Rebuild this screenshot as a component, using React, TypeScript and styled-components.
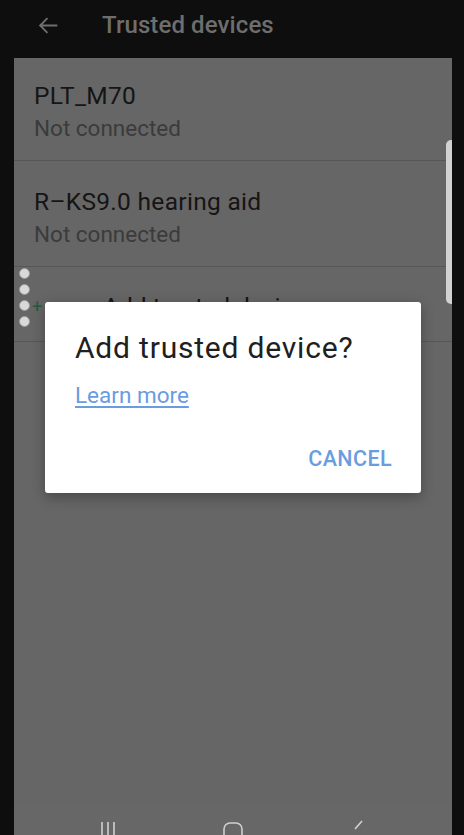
import React from "react";
import styled, { createGlobalStyle } from "styled-components";

const GlobalStyle = createGlobalStyle`
  html, body {
    margin: 0;
    padding: 0;
    background: #0e0e0e;
  }
  body {
    font-family: Roboto, "Noto Sans", sans-serif;
  }
`;

interface Device {
  name: string;
  status: string;
}

const devices: Device[] = [
  { name: "PLT_M70", status: "Not connected" },
  { name: "R\u2013KS9.0 hearing aid", status: "Not connected" },
];

const App = () => {
  return (
    <>
      <GlobalStyle />
      <Screen>
        <TopBar>
          <BackIcon viewBox="0 0 24 24">
            <path
              d="M20.5 12H4M11 5 4 12l7 7"
              fill="none"
              stroke="#6e6e6e"
              strokeWidth="1.8"
            />
          </BackIcon>
          <Title>Trusted devices</Title>
        </TopBar>
        <Content>
          <List>
            {devices.map((d) => (
              <DeviceRow key={d.name}>
                <DeviceName>{d.name}</DeviceName>
                <DeviceStatus>{d.status}</DeviceStatus>
              </DeviceRow>
            ))}
            <AddRow>
              <Plus>+</Plus>
              <AddLabel>Add trusted device</AddLabel>
            </AddRow>
          </List>
          <NavBar>
            <NavIcon viewBox="0 0 20 20">
              <path d="M3 5v14M9 5v14M15 5v14" stroke="#d0d0d0" strokeWidth="1.6" fill="none" />
            </NavIcon>
            <NavIcon viewBox="0 0 20 20">
              <rect x="1" y="6" width="18" height="18" rx="6" stroke="#d0d0d0" strokeWidth="1.6" fill="none" />
            </NavIcon>
            <NavIcon viewBox="0 0 20 20">
              <path d="M15 4 8 12" stroke="#d0d0d0" strokeWidth="1.6" fill="none" />
            </NavIcon>
          </NavBar>
          <ScrollHandle />
          <EdgeHandle>
            <Dot />
            <Dot />
            <Dot />
            <Dot />
          </EdgeHandle>
          <Dialog>
            <DialogTitle>Add trusted device?</DialogTitle>
            <LearnMore href="#">Learn more</LearnMore>
            <DialogActions>
              <CancelButton>CANCEL</CancelButton>
            </DialogActions>
          </Dialog>
        </Content>
      </Screen>
    </>
  );
};

export default App;

const Screen = styled.div`
  width: 464px;
  height: 835px;
  display: flex;
  flex-direction: column;
  background: #0e0e0e;
  overflow: hidden;
`;

const TopBar = styled.div`
  height: 58px;
  flex-shrink: 0;
  display: flex;
  align-items: center;
  padding-left: 36px;
  padding-bottom: 8px;
  box-sizing: border-box;
`;

const BackIcon = styled.svg`
  width: 25px;
  height: 25px;
`;

const Title = styled.div`
  margin-left: 41px;
  font-size: 24px;
  font-weight: 500;
  color: #6e6e6e;
  letter-spacing: 0.1px;
`;

const Content = styled.div`
  position: relative;
  flex: 1;
  margin: 0 12px 0 14px;
  background: #666666;
  display: flex;
  flex-direction: column;
`;

const List = styled.div`
  flex: 1;
  display: flex;
  flex-direction: column;
`;

const DeviceRow = styled.div`
  height: 103px;
  box-sizing: border-box;
  padding: 22px 20px 0 20px;
  border-bottom: 1px solid #575757;
  display: flex;
  flex-direction: column;
  gap: 2px;

  & + & {
    height: 106px;
    padding-top: 25px;
  }
`;

const DeviceName = styled.div`
  font-size: 24.5px;
  color: #151515;
  line-height: 32px;
  letter-spacing: 0.3px;
`;

const DeviceStatus = styled.div`
  font-size: 22.5px;
  color: #3b3b3b;
  line-height: 28px;
`;

const AddRow = styled.div`
  height: 75px;
  box-sizing: border-box;
  border-bottom: 1px solid #575757;
  display: flex;
  align-items: center;
  padding-left: 18px;
  padding-top: 4px;
`;

const Plus = styled.span`
  font-size: 18px;
  color: #1f5a44;
  width: 71px;
`;

const AddLabel = styled.span`
  font-size: 24.5px;
  color: #151515;
`;

const NavBar = styled.div`
  height: 32px;
  background: #676767;
  display: flex;
  justify-content: center;
  gap: 104px;
  align-items: flex-start;
`;

const NavIcon = styled.svg`
  width: 20px;
  height: 20px;
  margin-top: 14px;
  overflow: visible;
`;

const ScrollHandle = styled.div`
  position: absolute;
  right: 0;
  top: 82px;
  width: 6px;
  height: 164px;
  background: #d2d2d2;
  border-radius: 5px 0 0 5px;
`;

const EdgeHandle = styled.div`
  position: absolute;
  left: 5px;
  top: 210px;
  display: flex;
  flex-direction: column;
  gap: 5px;
`;

const Dot = styled.div`
  width: 11px;
  height: 11px;
  border-radius: 50%;
  background: #d9d9d9;
  border: 1px solid #9a9a9a;
  box-sizing: border-box;
`;

const Dialog = styled.div`
  position: absolute;
  left: 31px;
  top: 244px;
  width: 376px;
  height: 191px;
  box-sizing: border-box;
  background: #ffffff;
  border-radius: 3px;
  box-shadow: 0 4px 14px rgba(0, 0, 0, 0.3);
  padding: 26px 29px 0 30px;
  display: flex;
  flex-direction: column;
`;

const DialogTitle = styled.div`
  font-size: 30px;
  color: #202020;
  line-height: 40px;
  letter-spacing: 0.8px;
`;

const LearnMore = styled.a`
  margin-top: 12px;
  font-size: 22.5px;
  color: #6a9ce0;
  text-decoration: underline;
  text-underline-offset: 3px;
  align-self: flex-start;
  line-height: 30px;
`;

const DialogActions = styled.div`
  margin-top: 36px;
  display: flex;
  justify-content: flex-end;
`;

const CancelButton = styled.span`
  font-size: 21.5px;
  font-weight: 500;
  color: #6a9ce0;
  letter-spacing: 0.4px;
`;
